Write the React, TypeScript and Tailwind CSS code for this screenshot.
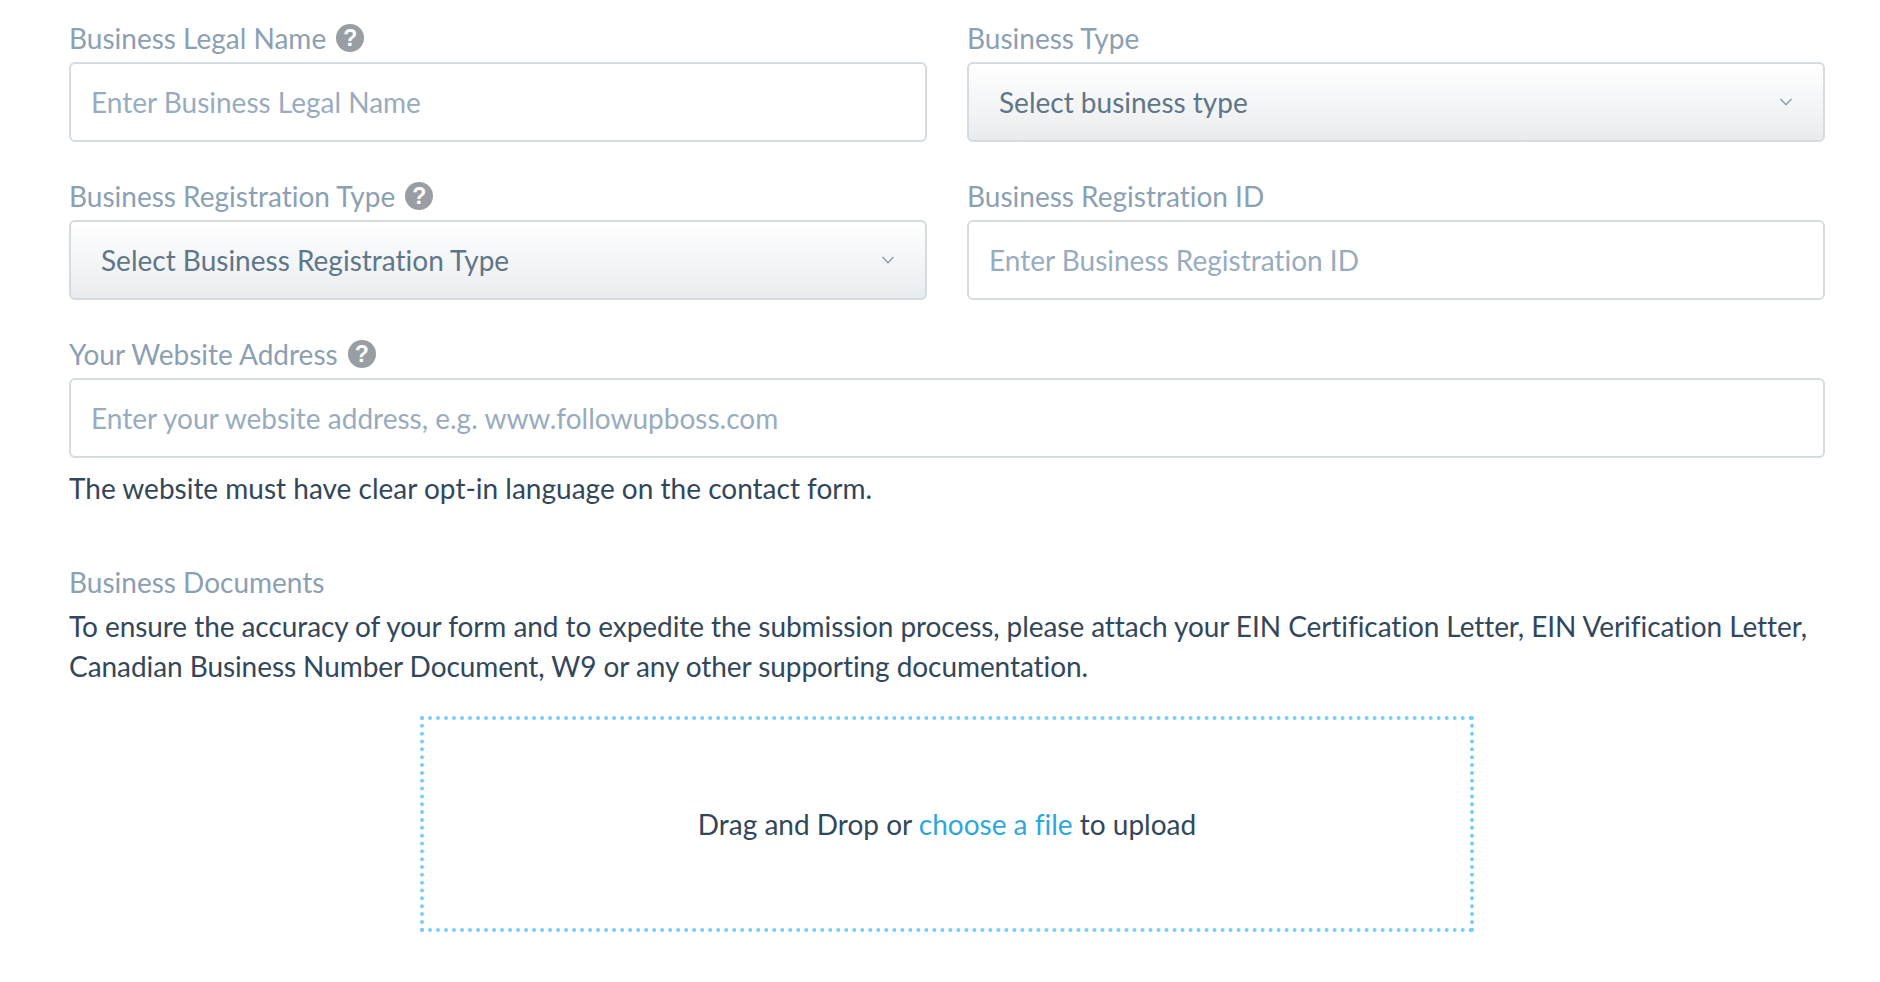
const font = { fontFamily: "Lato, 'Noto Sans', sans-serif" };

function HelpIcon() {
  return (
    <span className="ml-[10px] flex h-[28px] w-[28px] items-center justify-center rounded-full bg-[#989ea3] font-['Liberation_Sans',sans-serif] text-[23px] font-bold leading-none text-white">
      ?
    </span>
  );
}

function Label({ text, help }: { text: string; help?: boolean }) {
  return (
    <label className="mb-[3px] flex h-[40px] items-center pb-[2px] text-[28px] text-[#8ba0b3]">
      {text}
      {help && <HelpIcon />}
    </label>
  );
}

function TextInput({ placeholder }: { placeholder: string }) {
  return (
    <input
      placeholder={placeholder}
      className="h-[80px] w-full rounded-[6px] border-2 border-[#d5dce1] bg-white px-[20px] text-[28px] outline-none placeholder:text-[#98acc0]"
    />
  );
}

function SelectBox({ text }: { text: string }) {
  return (
    <button className="flex h-[80px] w-full items-center justify-between rounded-[6px] border-2 border-[#d5dce1] bg-gradient-to-b from-white to-[#e9ecef] px-[30px] text-[28px] text-[#5f7688]">
      {text}
      <svg width="14" height="8" viewBox="0 0 14 8" fill="none" stroke="#8d9dac" strokeWidth="1.4">
        <path d="M1.5 1 7 6.8 12.5 1" />
      </svg>
    </button>
  );
}

export default function App() {
  return (
    <div className="h-[982px] bg-white pl-[69px] pr-[55px] pt-[19px] [font-variant-ligatures:none]" style={font}>
      <div className="mb-[35px] grid grid-cols-2 gap-x-[40px]">
        <div>
          <Label text="Business Legal Name" help />
          <TextInput placeholder="Enter Business Legal Name" />
        </div>
        <div>
          <Label text="Business Type" />
          <SelectBox text="Select business type" />
        </div>
      </div>
      <div className="mb-[35px] grid grid-cols-2 gap-x-[40px]">
        <div>
          <Label text="Business Registration Type" help />
          <SelectBox text="Select Business Registration Type" />
        </div>
        <div>
          <Label text="Business Registration ID" />
          <TextInput placeholder="Enter Business Registration ID" />
        </div>
      </div>
      <Label text="Your Website Address" help />
      <TextInput placeholder="Enter your website address, e.g. www.followupboss.com" />
      <p className="mt-[10px] text-[28px] leading-[40px] text-[#33475a]">
        The website must have clear opt-in language on the contact form.
      </p>
      <div className="mt-[54px] text-[28px] leading-[40px] text-[#8ba0b3]">Business Documents</div>
      <p className="mt-[4px] text-[28px] leading-[40px] tracking-[-0.07px] text-[#33475a]">
        To ensure the accuracy of your form and to expedite the submission process, please attach your EIN Certification Letter, EIN Verification Letter, Canadian Business Number Document, W9 or any other supporting documentation.
      </p>
      <div className="mx-auto mt-[30px] flex h-[216px] w-[1054px] items-center justify-center border-4 border-dotted border-[#74cdff] text-[28px] text-[#33475a]">
        <span>
          Drag and Drop or <a className="text-[#2ea7de]">choose a file</a> to upload
        </span>
      </div>
    </div>
  );
}
